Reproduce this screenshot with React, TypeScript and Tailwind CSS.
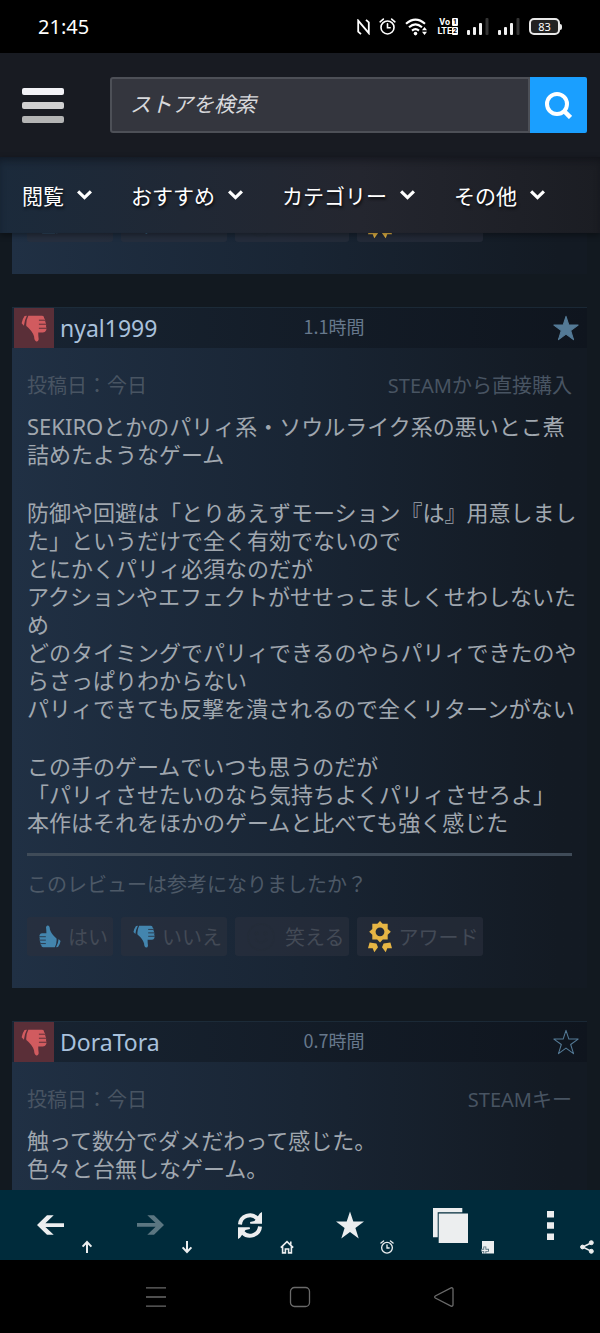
import React from "react";

const JP = "font-['Noto_Sans_CJK_JP',sans-serif]";
const MIXED = "font-['Noto_Sans','Noto_Sans_CJK_JP',sans-serif]";

const STAR =
  "M14 0.5 L17.3 10.6 H28 L19.4 16.9 L22.7 27.5 L14 21 L5.3 27.5 L8.6 16.9 L0 10.6 H10.7 Z";

function Thumb({ up = false, gap, className }: { up?: boolean; gap: string; className: string }) {
  return (
    <svg viewBox="0 0 26 27.5" className={className} fill="currentColor" aria-hidden="true">
      <g transform={up ? "rotate(180 13 13.75)" : undefined}>
        <path d="M5.8.8 3.4 1.1Q1.1 4.200.4 8.500L2.700 10.900Q3.200 5.400 5.800.800Z" />
        <path d="M7.200.8H21.300Q23.400.9 23.200 3 24.900 4.500 24.400 6.800 25.900 9 25.200 11.400 26.300 14 25.100 16 24.400 17.700 22 17.700H17.300Q17.300 21 17.800 24.700 17.300 27.300 15.300 26.900 13.200 26.200 13.100 22 11.300 16.200 5.200 11.300 4.600 6 7.200.8Z" />
        <path d="M18 5.300H24.600M18 9.400H25.600M18 13.500H26" stroke={gap} strokeWidth="1" fill="none" />
      </g>
    </svg>
  );
}

function AwardIcon() {
  return (
    <svg viewBox="0 0 24 32" className="h-8 w-6 shrink-0" fill="#e6b544" aria-hidden="true">
      <path
        fillRule="evenodd"
        d="M12 0 14.600 2.800H19.700V7.900L22.800 10.800 19.700 13.700V18.500H14.800L12 21.500 9.200 18.500H4.300V13.700L1.200 10.800 4.300 7.900V2.800H9.400ZM12 6.400A4.400 4.400 0 1 0 12 15.200 4.400 4.400 0 1 0 12 6.400Z"
      />
      <path d="M1.600 21.500 8.400 22.500 10 26.200 6.300 31.300 4.700 27.200 0 27.300Z" />
      <path d="M22.400 21.500 15.600 22.500 14 26.200 17.700 31.300 19.300 27.200 24 27.300Z" />
    </svg>
  );
}

function VoteButton({ icon, label, scrolledUnder }: { icon: React.ReactNode; label: string; scrolledUnder: boolean }) {
  return (
    <button
      type="button"
      className={`flex h-[39px] items-center gap-1.5 rounded-[3px] bg-[#2c303e]/60 pr-[5px] pl-[11px] text-[20px] leading-7 whitespace-nowrap text-[#434a56] ${JP}`}
    >
      {icon}
      <span className={scrolledUnder ? "invisible" : ""}>{label}</span>
    </button>
  );
}

function VoteRow({ scrolledUnder = false }: { scrolledUnder?: boolean }) {
  return (
    <div className="flex gap-2">
      <VoteButton
        scrolledUnder={scrolledUnder}
        label="はい"
        icon={
          <span className="flex w-6 justify-center text-[#4385ae]">
            <Thumb up gap="#262f3d" className="h-[23px] w-[22px]" />
          </span>
        }
      />
      <VoteButton
        scrolledUnder={scrolledUnder}
        label="いいえ"
        icon={
          <span className="flex w-6 justify-center text-[#4385ae]">
            <Thumb gap="#262f3d" className="h-[23px] w-[22px]" />
          </span>
        }
      />
      <VoteButton
        scrolledUnder={scrolledUnder}
        label="笑える"
        icon={
          <svg viewBox="0 0 33 30" className="h-[30px] w-[33px]" fill="none" stroke="#242c39" strokeWidth="1.500" aria-hidden="true">
            <circle cx="15" cy="15" r="13" />
            <path d="M9 17Q15 24 21 17" />
            <circle cx="10.500" cy="11.500" r="1" />
            <circle cx="19.500" cy="11.500" r="1" />
          </svg>
        }
      />
      <VoteButton scrolledUnder={scrolledUnder} label="アワード" icon={<AwardIcon />} />
    </div>
  );
}

type ReviewProps = {
  name: string;
  hours: string;
  source: string;
  favorite: boolean;
  paragraphs: string[][];
  children?: React.ReactNode;
  className?: string;
};

const CARD = "bg-linear-to-r from-[#203044] via-[#192534] via-50% to-[#131a23] to-95%";

function Review({ name, hours, source, favorite, paragraphs, children, className = "" }: ReviewProps) {
  return (
    <article className={`${CARD} ${className}`}>
      <header className="grid grid-cols-2 border-t border-[#20303f]/70 bg-linear-to-r from-[#182432] to-[#0f151e] pl-0.5">
        <div className="flex items-center gap-1.5">
          <span className="flex size-10 shrink-0 items-center justify-center bg-[#5a2f38] text-[#d15b5f]">
            <Thumb gap="#5a2f38" className="h-[27px] w-[26px]" />
          </span>
          <h2 className={`text-[23px] leading-8 text-[#a9c1dc] ${MIXED}`}>{name}</h2>
        </div>
        <div className="flex items-center justify-between pr-2 pl-[3px]">
          <span className={`pb-1 text-[18px] leading-6 text-[#67788c] ${JP}`}>{hours}</span>
          <button type="button" aria-label="お気に入り" className="text-[#547a96]">
            <svg
              viewBox="-1 -1 30 30"
              className="size-[26px]"
              fill={favorite ? "currentColor" : "none"}
              stroke="currentColor"
              strokeWidth="1.200"
              strokeLinejoin="round"
            >
              <path d={STAR} />
            </svg>
          </button>
        </div>
      </header>
      <div className={`px-[15px] pt-6 ${MIXED}`}>
        <div className="flex justify-between text-[20px] leading-7 text-[#485462]">
          <span>投稿日：今日</span>
          <span>{source}</span>
        </div>
        <div className="-mr-3 flex flex-col gap-[30px] pt-3 text-[22px] leading-7 text-[#a0a7af]">
          {paragraphs.map((lines, i) => (
            <p key={i}>
              {lines.map((line) => (
                <span key={line} className="block">
                  {line}
                </span>
              ))}
            </p>
          ))}
        </div>
        {children}
      </div>
    </article>
  );
}

function NavItem({ label }: { label: string }) {
  return (
    <button
      type="button"
      className={`flex items-center gap-[13px] text-[21px] leading-8 whitespace-nowrap text-white [text-shadow:1px_2px_3px_rgb(0_0_0/0.8)] ${JP}`}
    >
      {label}
      <svg viewBox="0 0 15 10" className="h-2.5 w-[15px]" fill="none" stroke="white" strokeWidth="3.200" aria-hidden="true">
        <path d="M1.100 1.400 7.500 7.600 13.900 1.400" />
      </svg>
    </button>
  );
}

function Signal() {
  return (
    <svg viewBox="0 0 22 17" className="h-[17px] w-[22px]" aria-hidden="true">
      <rect x="0" y="12" width="3" height="5" rx="1" fill="#f2f2f2" />
      <rect x="6" y="9" width="3" height="8" rx="1" fill="#f2f2f2" />
      <rect x="12" y="5" width="3" height="12" rx="1" fill="#f2f2f2" />
      <rect x="18.500" y="0" width="3" height="17" rx="1" fill="#333" />
    </svg>
  );
}

function Alarm({ className }: { className: string }) {
  return (
    <svg viewBox="0 0 18 18" className={className} fill="none" stroke="currentColor" strokeWidth="1.700" strokeLinecap="round" aria-hidden="true">
      <circle cx="9" cy="10" r="6.900" />
      <path d="M9 6.200V10.300H11.800M1.200 4 4.600 1.200M16.800 4 13.400 1.200" />
    </svg>
  );
}

function StatusBar() {
  return (
    <div className={`flex h-[53px] shrink-0 items-center justify-between bg-black pr-[38px] pl-[38px] text-white ${MIXED}`}>
      <time className="text-[20px] leading-6">21:45</time>
      <div className="flex items-center gap-[9px]">
        <svg viewBox="0 0 13 16" className="h-4 w-[13px]" fill="none" stroke="white" strokeWidth="1.800" aria-hidden="true">
          <path d="M4 15.200 1.200 12.600V1.600L11.800 14.200V3.400L9 .8" />
        </svg>
        <Alarm className="size-[17px]" />
        <svg viewBox="0 0 23 18" className="h-[18px] w-[23px]" fill="none" stroke="white" aria-hidden="true">
          <path d="M1 5.700Q10.500-2.600 20 5.700" strokeWidth="2.100" />
          <path d="M4 9.300Q10.500 3.500 17 9.300" strokeWidth="2.100" />
          <path d="M7 12.600Q10.500 9.600 14 12.600" strokeWidth="2.100" />
          <circle cx="10.500" cy="15.600" r="1.800" fill="white" stroke="none" />
          <path d="M19.500 9 22 12.200H17ZM19.500 17 22 13.800H17Z" fill="white" stroke="none" />
        </svg>
        <div className="grid grid-cols-[auto_6px] items-center gap-y-px font-['Roboto',sans-serif] text-[9px] leading-[8px] font-bold">
          <span className="text-center">Vo</span>
          <span className="rounded-[1px] bg-white text-center text-[7px] text-black">1</span>
          <span>LTE</span>
          <span className="rounded-[1px] bg-white text-center text-[7px] text-black">2</span>
        </div>
        <Signal />
        <Signal />
        <div className="flex items-center">
          <span className="flex h-[17px] w-[31px] items-center justify-center rounded-[5px] border-2 border-[#e8e8e8] bg-[#222] text-[11px] leading-3">
            83
          </span>
          <span className="h-1.5 w-0.5 rounded-r-sm bg-[#e8e8e8]" />
        </div>
      </div>
    </div>
  );
}

function ToolButton({ label, icon, badge, dim = false }: { label: string; icon: React.ReactNode; badge: React.ReactNode; dim?: boolean }) {
  return (
    <button type="button" aria-label={label} className="relative flex h-[70px] items-center justify-center">
      <span className={dim ? "text-[#5b7681]" : "text-[#eceeef]"}>{icon}</span>
      <span className="absolute right-1.5 bottom-1.5 text-[#eceeef]">{badge}</span>
    </button>
  );
}

const ARROW = "M0 10 10 .3H16.700L8.400 8.300H27V11.900H8.400L16.700 19.700H10Z";
const SMALL_ARROW = "M7 1.500V13M2.600 6.600 7 2 11.400 6.600";

function Toolbar() {
  return (
    <nav aria-label="ブラウザ" className="grid shrink-0 grid-cols-6 bg-[#002b3b]">
      <ToolButton
        label="戻る"
        icon={
          <svg viewBox="0 0 27 20" className="h-5 w-[27px]" fill="currentColor">
            <path d={ARROW} />
          </svg>
        }
        badge={
          <svg viewBox="0 0 14 14" className="size-3.5" fill="none" stroke="currentColor" strokeWidth="2">
            <path d={SMALL_ARROW} />
          </svg>
        }
      />
      <ToolButton
        dim
        label="進む"
        icon={
          <svg viewBox="0 0 27 20" className="h-5 w-[27px] rotate-180" fill="currentColor">
            <path d={ARROW} />
          </svg>
        }
        badge={
          <svg viewBox="0 0 14 14" className="size-3.5 rotate-180" fill="none" stroke="currentColor" strokeWidth="2">
            <path d={SMALL_ARROW} />
          </svg>
        }
      />
      <ToolButton
        label="更新"
        icon={
          <svg viewBox="0 0 24 27" className="h-[27px] w-6">
            {["", "rotate(180 12 13.500)"].map((t) => (
              <g key={t} transform={t || undefined}>
                <path d="M2 12.500A10 9.700 0 0 1 19.300 6.500" fill="none" stroke="currentColor" strokeWidth="4" />
                <path d="M24 0V11.800H12.300L12 10 16.500 9 22 1.200Z" fill="currentColor" />
              </g>
            ))}
          </svg>
        }
        badge={
          <svg viewBox="0 0 14 14" className="size-3.5" fill="none" stroke="currentColor" strokeWidth="1.600">
            <path d="M.8 7.600 7 1.600 13.200 7.600M2.600 6.500V12.900H5.400V9H8.600V12.900H11.400V6.500M10.800 1.500V4.500" />
          </svg>
        }
      />
      <ToolButton
        label="ブックマーク"
        icon={
          <svg viewBox="0 0 28 28" className="size-7" fill="currentColor">
            <path d={STAR} />
          </svg>
        }
        badge={<Alarm className="size-3.5" />}
      />
      <ToolButton
        label="タブ"
        icon={
          <svg viewBox="0 0 35 35" className="size-[35px]" fill="currentColor">
            <path d="M0 0H29.300V4.300H4.700V29.200H0Z" />
            <rect x="5.700" y="5.500" width="29.300" height="29.500" />
          </svg>
        }
        badge={
          <svg viewBox="0 0 14 14" className="size-3.5">
            <rect x="2" y="1" width="12" height="12.500" fill="currentColor" />
            <path d="M4.800 6.500V14M1 10.300H9" stroke="#5b7681" strokeWidth="3" />
            <path d="M4.800 7.300V13.300M1.800 10.300H8" stroke="currentColor" strokeWidth="1.200" />
          </svg>
        }
      />
      <ToolButton
        label="メニュー"
        icon={
          <svg viewBox="0 0 7 29" className="h-[29px] w-[7px]" fill="currentColor">
            <path d="M0 0H7V6.500H0ZM0 11.200H7V17.700H0ZM0 22.500H7V29H0Z" />
          </svg>
        }
        badge={
          <svg viewBox="0 0 14 14" className="size-3.5" fill="currentColor" stroke="currentColor">
            <path d="M11.500 2.700 2.700 7 11.500 11.400" fill="none" strokeWidth="1.600" />
            <circle cx="11.300" cy="2.700" r="2" />
            <circle cx="2.500" cy="7" r="1.900" />
            <circle cx="11.300" cy="11.300" r="2" />
          </svg>
        }
      />
    </nav>
  );
}

function SystemNav() {
  const svg = "size-[22px]";
  return (
    <div className="shrink-0 bg-black">
      <div className="mx-auto grid h-[73px] w-[72%] grid-cols-3 text-[#6a6a6a]">
        <button type="button" aria-label="履歴" className="flex items-center justify-center">
          <svg viewBox="0 0 22 22" className={svg} stroke="currentColor" strokeWidth="1.300">
            <path d="M1 1.800H21M1 11H21M1 20.200H21" />
          </svg>
        </button>
        <button type="button" aria-label="ホーム" className="flex items-center justify-center">
          <svg viewBox="0 0 22 22" className={svg} fill="none" stroke="currentColor" strokeWidth="1.300">
            <rect x="1.500" y="1.500" width="19" height="19" rx="4" />
          </svg>
        </button>
        <button type="button" aria-label="戻る" className="flex items-center justify-center">
          <svg viewBox="0 0 22 22" className={svg} fill="none" stroke="currentColor" strokeWidth="1.300">
            <path d="M2.300 10Q1 11 2.300 12L18 20.200Q20 20.600 20 18.500V3.500Q20 1.400 18 1.800Z" />
          </svg>
        </button>
      </div>
    </div>
  );
}

export default function App() {
  return (
    <div className="flex h-screen flex-col overflow-hidden bg-[#121920]">
      <StatusBar />

      <header className="flex h-[104px] shrink-0 items-center gap-[46px] bg-[#181b22] pr-[13px] pl-[22px]">
        <button type="button" aria-label="メニュー" className="flex w-[42px] shrink-0 flex-col gap-[7px]">
          <span className="h-[7px] w-full rounded-[2px] bg-[#f2f2f6]" />
          <span className="h-[7px] w-full rounded-[2px] bg-[#d0d0d1]" />
          <span className="h-[7px] w-full rounded-[2px] bg-[#b3b4b4]" />
        </button>
        <form role="search" className="flex min-w-0 flex-1" onSubmit={(e) => e.preventDefault()}>
          <input
            type="text"
            aria-label="ストアを検索"
            placeholder="ストアを検索"
            className={`h-14 min-w-0 flex-1 rounded-l-[3px] border-2 border-[#4d5057] bg-[#34363e] px-[18px] pb-1 text-[21px] italic text-white outline-none placeholder:text-[#d8d9dc] ${JP}`}
          />
          <button
            type="submit"
            aria-label="検索"
            className="flex h-14 w-[57px] items-center justify-center rounded-r-[2px] bg-[#1a9fff]"
          >
            <svg viewBox="0 0 27 27" className="size-[27px]" fill="none" stroke="white" strokeWidth="4" aria-hidden="true">
              <circle cx="12" cy="12" r="10" />
              <path d="M18.500 18.500 25.500 25.500" strokeWidth="4.500" />
            </svg>
          </button>
        </form>
      </header>

      <nav
        aria-label="ストア"
        className="z-10 flex h-[76px] shrink-0 items-center gap-[39px] bg-linear-to-r from-[#1b2a3b] via-[#24262f] via-60% to-[#1b1d23] px-[22px] shadow-[0_2px_6px_rgb(0_0_0/0.4),inset_0_6px_8px_-3px_rgb(8_10_16/0.5)]"
      >
        <NavItem label="閲覧" />
        <NavItem label="おすすめ" />
        <NavItem label="カテゴリー" />
        <NavItem label="その他" />
      </nav>

      <main className="flex min-h-0 flex-1 flex-col gap-[33px] overflow-hidden pr-[13px] pl-3">
        <section className={`flex h-[41px] shrink-0 flex-col justify-end overflow-hidden px-[15px] pb-8 ${CARD}`}>
          <VoteRow scrolledUnder />
        </section>

        <Review
          className="shrink-0"
          name="nyal1999"
          hours="1.1時間"
          source="STEAMから直接購入"
          favorite
          paragraphs={[
            ["SEKIROとかのパリィ系・ソウルライク系の悪いとこ煮詰めたようなゲーム"],
            [
              "防御や回避は「とりあえずモーション『は』用意しました」というだけで全く有効でないので",
              "とにかくパリィ必須なのだが",
              "アクションやエフェクトがせせっこましくせわしないため",
              "どのタイミングでパリィできるのやらパリィできたのやらさっぱりわからない",
              "パリィできても反撃を潰されるので全くリターンがない",
            ],
            [
              "この手のゲームでいつも思うのだが",
              "「パリィさせたいのなら気持ちよくパリィさせろよ」",
              "本作はそれをほかのゲームと比べても強く感じた",
            ],
          ]}
        >
          <hr className="mt-[17px] border-t-[3px] border-[#3f4b58]" />
          <p className="pt-[15px] text-[20px] leading-7 text-[#4d5967]">このレビューは参考になりましたか？</p>
          <div className="pt-[18px] pb-8">
            <VoteRow />
          </div>
        </Review>

        <Review
          className="min-h-0 flex-1"
          name="DoraTora"
          hours="0.7時間"
          source="STEAMキー"
          favorite={false}
          paragraphs={[["触って数分でダメだわって感じた。", "色々と台無しなゲーム。"]]}
        />
      </main>

      <Toolbar />
      <SystemNav />
    </div>
  );
}
